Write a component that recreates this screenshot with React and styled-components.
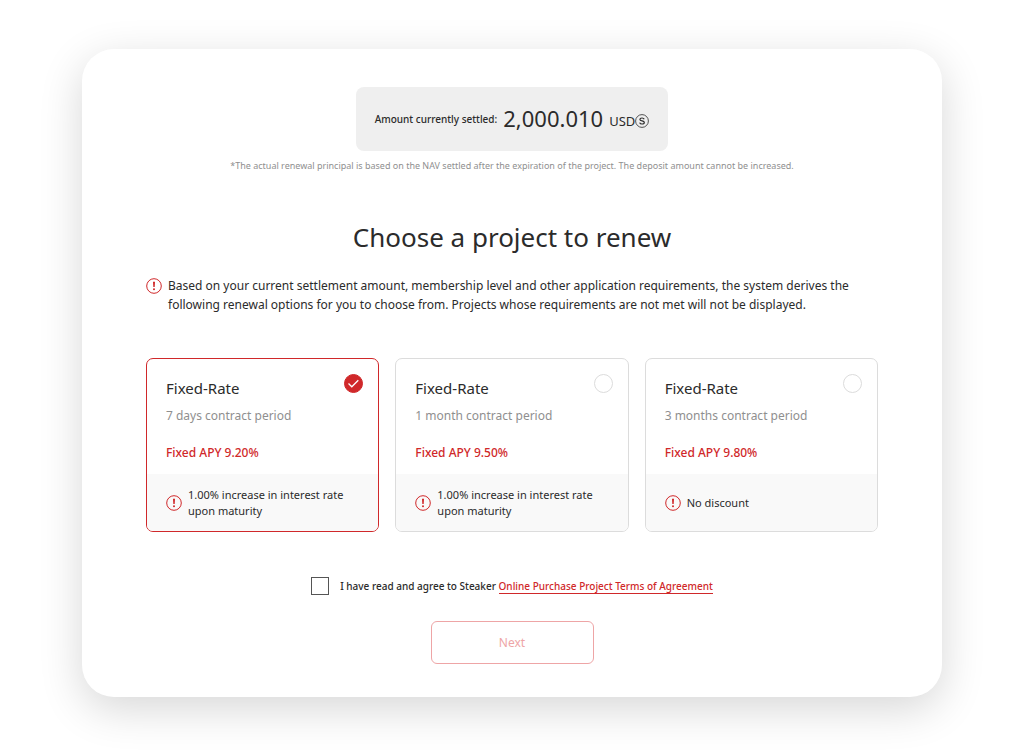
import React, { useState } from "react"
import styled, { createGlobalStyle } from "styled-components"

const colors = {
  red: "#d0282a",
  text: "#2b2b2b",
  grey: "#8f8f8f",
  line: "#dcdcdc",
}

const projects = [
  {
    id: "7d",
    period: "7 days contract period",
    apy: "9.20%",
    note: "1.00% increase in interest rate upon maturity",
  },
  {
    id: "1m",
    period: "1 month contract period",
    apy: "9.50%",
    note: "1.00% increase in interest rate upon maturity",
  },
  {
    id: "3m",
    period: "3 months contract period",
    apy: "9.80%",
    note: "No discount",
  },
]

const NoticeIcon = () => (
  <IconSvg viewBox="0 0 16 16" aria-hidden="true">
    <circle cx="8" cy="8" r="7.3" fill="none" stroke={colors.red} />
    <path d="M7 3.8h2l-.3 5.200H7.300z" fill={colors.red} />
    <circle cx="8" cy="11.300" r="1" fill={colors.red} />
  </IconSvg>
)

const CoinIcon = () => (
  <CoinSvg viewBox="0 0 14 14" aria-hidden="true">
    <circle cx="7" cy="7" r="6.4" fill="none" stroke={colors.text} strokeWidth="0.8" />
    <path
      d="M9.2 5.2C8.900 4.300 8.200 4 7 4c-1.300 0-2.100.5-2.100 1.400 0 2.100 4.400 1 4.400 3.100 0 1-.9 1.500-2.200 1.500-1.400 0-2.200-.5-2.400-1.400"
      fill="none"
      stroke={colors.text}
      strokeWidth="1.200"
    />
  </CoinSvg>
)

export default function App() {
  const [selected, setSelected] = useState("7d")
  const [agreed, setAgreed] = useState(false)

  return (
    <>
      <GlobalStyle />
      <Panel>
        <Amount>
          <AmountLabel>Amount currently settled:</AmountLabel>
          <AmountValue>2,000.010</AmountValue>
          <Currency>
            USD
            <CoinIcon />
          </Currency>
        </Amount>
        <Footnote>
          *The actual renewal principal is based on the NAV settled after the
          expiration of the project. The deposit amount cannot be increased.
        </Footnote>

        <Title>Choose a project to renew</Title>
        <Intro>
          <NoticeIcon />
          <p>
            Based on your current settlement amount, membership level and other
            application requirements, the system derives the following renewal
            options for you to choose from. Projects whose requirements are not
            met will not be displayed.
          </p>
        </Intro>

        <Projects>
          {projects.map(({ id, period, apy, note }) => (
            <Project key={id} $selected={selected === id}>
              <ProjectTop>
                <div>
                  <ProjectName>Fixed-Rate</ProjectName>
                  <Period>{period}</Period>
                  <Apy>Fixed APY {apy}</Apy>
                </div>
                <Radio
                  type="radio"
                  name="project"
                  value={id}
                  checked={selected === id}
                  onChange={() => setSelected(id)}
                />
              </ProjectTop>
              <ProjectNote>
                <NoticeIcon />
                <span>{note}</span>
              </ProjectNote>
            </Project>
          ))}
        </Projects>

        <Agreement>
          <Checkbox
            id="agree"
            type="checkbox"
            checked={agreed}
            onChange={e => setAgreed(e.target.checked)}
          />
          <label htmlFor="agree">
            I have read and agree to Steaker{" "}
            <Terms href="#terms">Online Purchase Project Terms of Agreement</Terms>
          </label>
        </Agreement>
        <NextButton type="button" disabled={!agreed}>
          Next
        </NextButton>
      </Panel>
    </>
  )
}

const GlobalStyle = createGlobalStyle`
  * {
    box-sizing: border-box;
  }
  body {
    margin: 0;
    padding: 49px 24px 58px;
    background: #fff;
    color: ${colors.text};
    font-family: "Noto Sans", "Open Sans", sans-serif;
    font-size: 12px;
  }
  h1, h2, p {
    margin: 0;
    font-weight: 400;
  }
`

const Panel = styled.main`
  display: flex;
  flex-direction: column;
  align-items: center;
  max-width: 860px;
  margin: 0 auto;
  padding: 38px 64px 33px;
  border-radius: 32px;
  background: #fff;
  box-shadow: 0 12px 44px rgba(0, 0, 0, 0.16);
`

const IconSvg = styled.svg`
  flex: none;
  width: 16px;
  height: 16px;
`

const CoinSvg = styled.svg`
  width: 14px;
  height: 14px;
`

const Amount = styled.div`
  display: flex;
  align-items: center;
  height: 64px;
  padding: 0 19px;
  border-radius: 8px;
  background: #efefef;
`

const AmountLabel = styled.span`
  font-size: 10px;
  font-weight: 500;
`

const AmountValue = styled.span`
  margin: 0 6px;
  font-size: 22px;
  line-height: 30px;
  padding-bottom: 2px;
`

const Currency = styled.span`
  display: flex;
  align-items: center;
  padding-top: 3px;
  font-size: 13px;
`

const Footnote = styled.p`
  margin-top: 8px;
  color: ${colors.grey};
  font-size: 9px;
  line-height: 14px;
`

const Title = styled.h1`
  margin-top: 46px;
  font-size: 26px;
  line-height: 36px;
`

const Intro = styled.div`
  display: flex;
  gap: 6px;
  width: 100%;
  margin-top: 21px;
  line-height: 19px;
  svg {
    margin-top: 2px;
  }
`

const Projects = styled.div`
  display: grid;
  grid-template-columns: repeat(3, 1fr);
  gap: 16px;
  width: 100%;
  margin-top: 44px;
`

const Project = styled.label`
  display: flex;
  flex-direction: column;
  overflow: hidden;
  border: 1px solid ${props => (props.$selected ? colors.red : colors.line)};
  border-radius: 7px;
  cursor: pointer;
`

const ProjectTop = styled.div`
  display: flex;
  justify-content: space-between;
  height: 115px;
  padding: 15px 15px 0 19px;
`

const ProjectName = styled.h2`
  margin-bottom: 2px;
  font-size: 15px;
  line-height: 28px;
`

const Period = styled.p`
  color: ${colors.grey};
  line-height: 24px;
`

const Apy = styled.p`
  margin-top: 13px;
  color: ${colors.red};
  font-weight: 500;
  line-height: 24px;
`

const Radio = styled.input`
  appearance: none;
  width: 19px;
  height: 19px;
  margin: 0;
  border: 1px solid ${colors.line};
  border-radius: 50%;
  background: #fff;
  &:checked {
    border-color: ${colors.red};
    background: ${colors.red}
      url("data:image/svg+xml,%3Csvg xmlns='http://www.w3.org/2000/svg' viewBox='0 0 17 17'%3E%3Cpath d='M3.500 8.500l3.300 3.300 6.500-6.500' fill='none' stroke='white' stroke-width='1.300'/%3E%3C/svg%3E")
      center / 17px no-repeat;
  }
`

const ProjectNote = styled.div`
  display: flex;
  align-items: center;
  gap: 6px;
  height: 57px;
  padding: 0 32px 0 19px;
  background: #f9f9f9;
  font-size: 11px;
  line-height: 16px;
`

const Agreement = styled.div`
  display: flex;
  align-items: center;
  gap: 11px;
  margin-top: 45px;
  font-size: 10px;
  font-weight: 500;
  line-height: 18px;
`

const Checkbox = styled.input`
  appearance: none;
  width: 18px;
  height: 18px;
  margin: 0;
  border: 1px solid #555;
  background: #fff;
  &:checked {
    background: ${colors.red};
  }
`

const Terms = styled.a`
  border-bottom: 1px solid ${colors.red};
  color: ${colors.red};
  text-decoration: none;
`

const NextButton = styled.button`
  width: 163px;
  height: 43px;
  margin-top: 26px;
  border: 1px solid ${colors.red};
  border-radius: 6px;
  background: #fff;
  color: ${colors.red};
  font: inherit;
  &:disabled {
    border-color: #eea5a6;
    color: #eea5a6;
  }
`
